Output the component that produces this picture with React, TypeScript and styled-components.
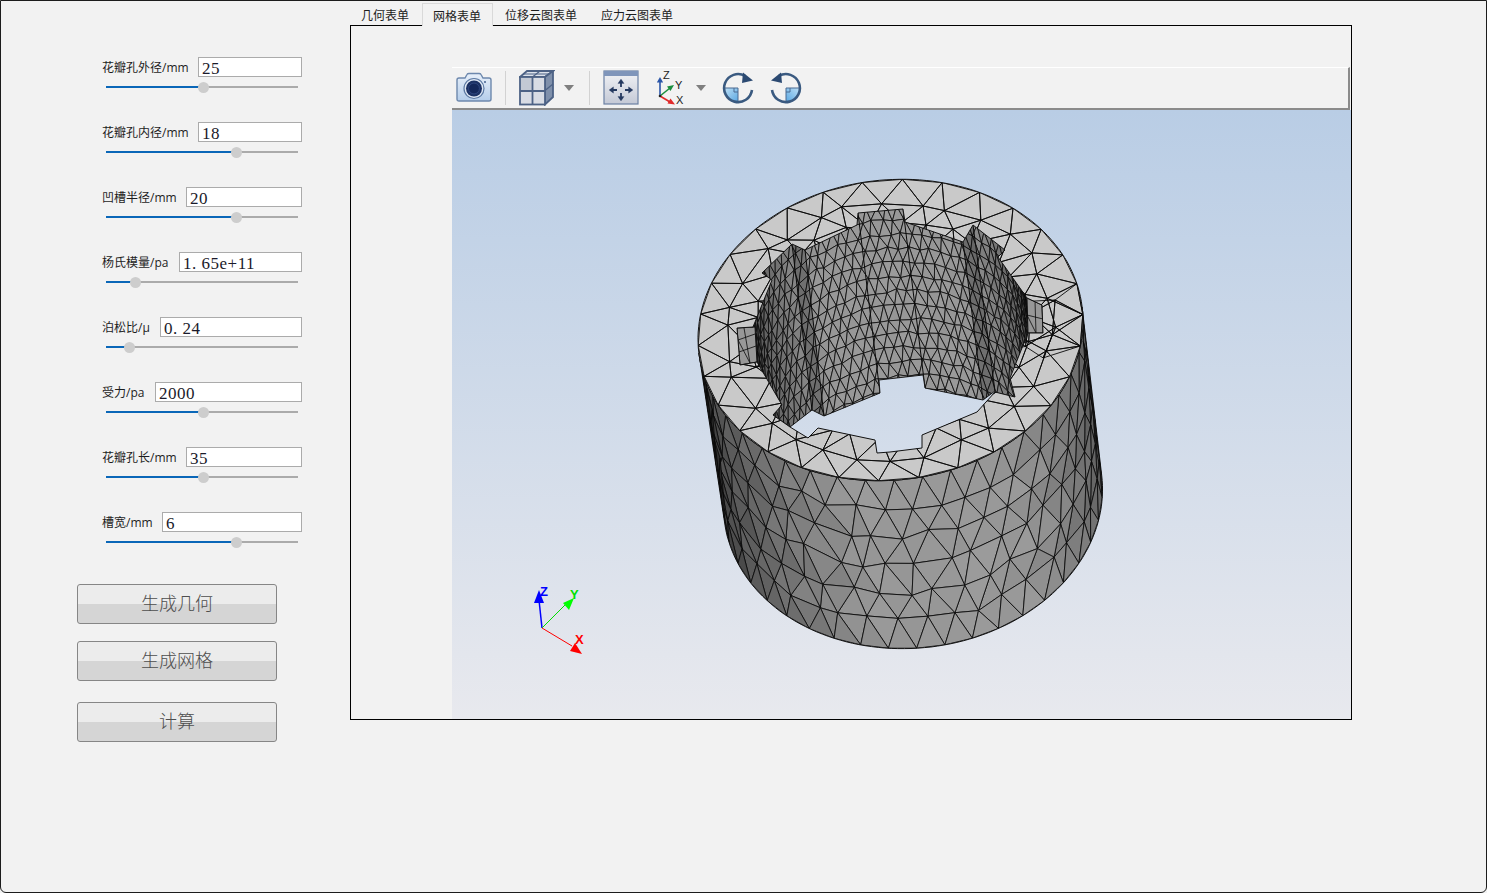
import * as React from 'react';
import styled, { createGlobalStyle } from 'styled-components';

const GlobalStyle = createGlobalStyle`
  html, body {
    margin: 0;
    padding: 0;
    background: #f2f2f2;
  }
`;

type P = [number, number];

const FIELDS = [
  { label: '花瓣孔外径/mm', value: '25', labelWidth: 97, percent: 50.5 },
  { label: '花瓣孔内径/mm', value: '18', labelWidth: 97, percent: 67.7 },
  { label: '凹槽半径/mm', value: '20', labelWidth: 85, percent: 67.7 },
  { label: '杨氏模量/pa', value: '1. 65e+11', labelWidth: 78, percent: 15.1 },
  { label: '泊松比/μ', value: '0. 24', labelWidth: 59, percent: 12 },
  { label: '受力/pa', value: '2000', labelWidth: 54, percent: 50.5 },
  { label: '花瓣孔长/mm', value: '35', labelWidth: 85, percent: 50.5 },
  { label: '槽宽/mm', value: '6', labelWidth: 61, percent: 67.7 },
];

const TABS = [
  { label: '几何表单', active: false, left: 11, right: 13 },
  { label: '网格表单', active: true, left: 10, right: 11 },
  { label: '位移云图表单', active: false, left: 12, right: 12 },
  { label: '应力云图表单', active: false, left: 12, right: 12 },
];

// --- mesh of the part, all coordinates are page pixels ---

const noise = (i: number, j: number) => {
  const s = Math.sin(i * 127.1 + j * 311.7) * 43758.5453;
  return s - Math.floor(s);
};

const onEllipse = (cx: number, cy: number, a: number, b: number, t: number): P => [
  cx + a * Math.cos(t) * 0.993 + b * Math.sin(t) * 0.119,
  cy - a * Math.cos(t) * 0.119 + b * Math.sin(t) * 0.993,
];

const topRim = (t: number, s = 1) => onEllipse(890.5, 330, 193 * s, 150 * s, t);
const bottomRim = (t: number) => onEllipse(913, 498, 190, 150, t);
const wallTop = (t: number) => onEllipse(890.5, 330, 138, 107, t);
const wallBottom = (t: number) => onEllipse(912, 498, 136, 106, t);

const lerp = (p: P, q: P, v: number): P => [p[0] + (q[0] - p[0]) * v, p[1] + (q[1] - p[1]) * v];
const pts = (list: P[]) => list.map((p) => `${p[0].toFixed(1)},${p[1].toFixed(1)}`).join(' ');

interface Tri {
  points: string;
  grey: number;
}

// triangle strips between rows of points, every other row shifted by half a column
const strips = (
  cols: number,
  rows: number,
  vertex: (i: number, j: number) => P,
  shade: (i: number, j: number, seed: number) => number,
) => {
  const tris: Tri[] = [];
  for (let j = 0; j < rows; j++) {
    for (let i = -1; i <= cols; i++) {
      const a = vertex(i, j);
      const b = vertex(i + 1, j);
      const c = vertex(i, j + 1);
      const d = vertex(i + 1, j + 1);
      const first = j % 2 === 0 ? [a, b, c] : [a, b, d];
      const second = j % 2 === 0 ? [b, d, c] : [a, d, c];
      tris.push({ points: pts(first), grey: shade(i, j, 0) });
      tris.push({ points: pts(second), grey: shade(i, j, 1) });
    }
  }
  return tris;
};

const SIDE_COLS = 21;
const SIDE_ROWS = 6;
const sideAngle = (i: number, j: number) => (Math.PI * (i + (j % 2) * 0.5)) / SIDE_COLS;

const sideTris = strips(
  SIDE_COLS,
  SIDE_ROWS,
  (i, j) => {
    const t = sideAngle(i, j);
    const inner = j > 0 && j < SIDE_ROWS;
    const dv = inner ? (noise(i, j) - 0.5) * 0.05 : 0;
    const dt = inner ? (noise(j, i) - 0.5) * 0.07 : 0;
    return lerp(topRim(t + dt), bottomRim(t + dt), j / SIDE_ROWS + dv);
  },
  (i, j, seed) => {
    const d = (sideAngle(i, j) * 180) / Math.PI + 4;
    const base = d < 60 ? 152 - (60 - d) * 1.1 : d > 105 ? 152 - (d - 105) * 1.3 : 152;
    return Math.round(base + (noise(i + seed * 9, j + 3) - 0.5) * 6);
  },
);

const TOP_COLS = 30;
const TOP_SCALES = [1, 0.855, 0.71, 0.57];

const topTris = strips(
  TOP_COLS,
  TOP_SCALES.length - 1,
  (i, j) => {
    const t = (Math.PI * 2 * (i + (j % 2) * 0.5)) / TOP_COLS + 0.05;
    if (j === 0) return topRim(t);
    return topRim(t + (noise(i, j) - 0.5) * 0.11, TOP_SCALES[j] + (noise(j, i) - 0.5) * 0.06);
  },
  () => 200,
);

const WALL_COLS = 40;
const WALL_ROWS = 14;
const wallAngle = (i: number, j: number) => Math.PI + (Math.PI * (i + (j % 2) * 0.5)) / WALL_COLS;

const wallTris = strips(
  WALL_COLS,
  WALL_ROWS,
  (i, j) => {
    const t = wallAngle(i, j) + (noise(i, j) - 0.5) * 0.025;
    return lerp(wallTop(t), wallBottom(t), j / 12 - 0.1 + (noise(j, i) - 0.5) * 0.02);
  },
  (i, j, seed) => {
    const d = Math.abs((wallAngle(i, j) * 180) / Math.PI - 270);
    const base = d < 30 ? 152 : 152 - (d - 30) * 1.45;
    return Math.round(base + (noise(i + seed * 9, j + 5) - 0.5) * 6);
  },
);

const steps = (from: number, to: number, n: number) =>
  Array.from({ length: n + 1 }, (_, k) => from + ((to - from) * k) / n);

const SILHOUETTE: P[] = [
  ...steps(0, Math.PI, 90).map((t) => bottomRim(t)),
  ...steps(Math.PI, 0, 90).map((t) => topRim(t)),
];

const OUTER_RIM = steps(0, Math.PI * 2, 180).map((t) => topRim(t));

const HOLE_BACK: P[] = [
  [740, 365], [737, 328], [753, 327], [772, 280], [762, 273], [792, 244], [805, 250],
  [857, 225], [858, 213], [903, 209], [905, 222], [963, 242], [973, 225], [1005, 250],
  [998, 257], [1027, 298], [1042, 305], [1043, 333], [1028, 333], [1010, 378], [1015, 397],
];

const HOLE_FRONT: P[] = [
  [995, 392], [977, 412], [922, 435], [922, 448], [890, 452], [877, 453], [875, 440],
  [818, 428], [808, 438], [790, 427], [773, 415], [782, 405], [757, 362],
];

const WALL_EDGE: P[] = [
  [1011, 401], [995, 391], [983, 400], [925, 388], [923, 375], [879, 380], [880, 393],
  [824, 416], [812, 410], [790, 427], [773, 415], [757, 362],
];

const NOTCH_FACES: { list: P[]; alpha: number }[] = [
  { list: [[963, 242], [973, 225], [995, 391], [983, 400]], alpha: 0.22 },
  { list: [[792, 244], [805, 250], [824, 416], [812, 410]], alpha: 0.2 },
];

const NOTCH_LINES: [P, P][] = [
  [[858, 213], [880, 393]],
  [[903, 209], [925, 388]],
  [[963, 242], [983, 400]],
  [[973, 225], [995, 391]],
  [[805, 250], [824, 416]],
  [[792, 244], [812, 410]],
];

// the two shallow pockets left and right of the bore
const POCKETS: { outline: P[]; lines: [P, P][] }[] = [
  {
    outline: [[737, 328], [755, 327], [757, 362], [740, 365]],
    lines: [
      [[738, 340], [755, 334]],
      [[739, 352], [756, 346]],
      [[744, 328], [750, 363]],
      [[738, 340], [750, 363]],
    ],
  },
  {
    outline: [[1027, 298], [1042, 305], [1043, 333], [1028, 333]],
    lines: [
      [[1027, 315], [1043, 319]],
      [[1035, 301], [1036, 333]],
      [[1027, 315], [1036, 333]],
    ],
  },
];

const annulusPath =
  `M${pts(OUTER_RIM).replace(/ /g, ' L')} Z ` +
  `M${pts([...HOLE_BACK, ...HOLE_FRONT]).replace(/ /g, ' L')} Z`;

const PartMesh = () => (
  <g>
    <defs>
      <clipPath id="sideClip">
        <polygon points={pts(SILHOUETTE)} />
      </clipPath>
      <clipPath id="wallClip">
        <polygon points={pts([...HOLE_BACK, ...WALL_EDGE])} />
      </clipPath>
      <clipPath id="topClip">
        <path d={annulusPath} clipRule="evenodd" />
      </clipPath>
    </defs>

    <g clipPath="url(#sideClip)">
      {sideTris.map((tri, k) => (
        <polygon key={k} points={tri.points} fill={`rgb(${tri.grey},${tri.grey},${tri.grey})`} stroke="#0a0a0a" strokeWidth={0.85} />
      ))}
    </g>
    <polygon points={pts(SILHOUETTE)} fill="none" stroke="#111" strokeWidth={1} />

    <polygon points={pts([...HOLE_BACK, ...HOLE_FRONT])} fill="url(#viewBg)" />

    <polygon points={pts([...HOLE_BACK, ...WALL_EDGE])} fill="#737373" />
    <g clipPath="url(#wallClip)">
      {wallTris.map((tri, k) => (
        <polygon key={k} points={tri.points} fill={`rgb(${tri.grey},${tri.grey},${tri.grey})`} stroke="#0a0a0a" strokeWidth={0.8} />
      ))}
      {NOTCH_FACES.map((face, k) => (
        <polygon key={k} points={pts(face.list)} fill={`rgba(0,0,0,${face.alpha})`} />
      ))}
      {NOTCH_LINES.map(([p, q], k) => (
        <line key={k} x1={p[0]} y1={p[1]} x2={q[0]} y2={q[1]} stroke="#0a0a0a" strokeWidth={1} />
      ))}
    </g>
    {POCKETS.map((pocket, k) => (
      <g key={k}>
        <polygon points={pts(pocket.outline)} fill="#989898" stroke="#111" strokeWidth={1} />
        {pocket.lines.map(([p, q], n) => (
          <line key={n} x1={p[0]} y1={p[1]} x2={q[0]} y2={q[1]} stroke="#0a0a0a" strokeWidth={0.8} />
        ))}
      </g>
    ))}
    <polyline points={pts(WALL_EDGE)} fill="none" stroke="#111" strokeWidth={0.9} />

    <path d={annulusPath} fill="#c9c9c9" fillRule="evenodd" />
    <g clipPath="url(#topClip)">
      {topTris.map((tri, k) => (
        <polygon key={k} points={tri.points} fill="none" stroke="#0a0a0a" strokeWidth={0.9} />
      ))}
    </g>
    <path d={annulusPath} fill="none" stroke="#111" strokeWidth={1} />
  </g>
);

const AxisTriad = () => (
  <g>
    <line x1={542} y1={628} x2={539} y2={600} stroke="#0000ff" strokeWidth={1.5} />
    <polygon points="539,590 544,603 534,603" fill="#0000ff" />
    <line x1={542} y1={628} x2={566} y2={604} stroke="#00e000" strokeWidth={1} />
    <polygon points="574,598 569,610 563,603" fill="#00ff00" />
    <line x1={542} y1={628} x2={572} y2={646} stroke="#ff0000" strokeWidth={1} />
    <polygon points="582,654 570,651 575,643" fill="#ff0000" />
    <AxisLabel x={540} y={596} fill="#0000ff">Z</AxisLabel>
    <AxisLabel x={570} y={599} fill="#00e000">Y</AxisLabel>
    <AxisLabel x={575} y={644} fill="#ff0000">X</AxisLabel>
  </g>
);

// --- toolbar icons ---

const CameraIcon = () => (
  <svg width={36} height={36} viewBox="0 0 36 36">
    <defs>
      <linearGradient id="camBody" x1="0" y1="0" x2="0" y2="1">
        <stop offset="0" stopColor="#e8f0fa" />
        <stop offset="1" stopColor="#b4cdea" />
      </linearGradient>
    </defs>
    <path
      d="M3 8 H9 L11 4.5 Q11.5 3.5 13 3.5 H23 Q24.5 3.5 25 4.5 L27 8 H33 Q35 8 35 10 V29 Q35 31 33 31 H3 Q1 31 1 29 V10 Q1 8 3 8 Z"
      fill="url(#camBody)"
      stroke="#6d88ad"
      strokeWidth={1.4}
    />
    <circle cx={18} cy={18.5} r={10} fill="#dfe8f4" stroke="#5d7aa3" strokeWidth={1.2} />
    <circle cx={18} cy={18.5} r={8} fill="#1c3264" />
    <circle cx={18} cy={18.5} r={5.4} fill="#14285a" stroke="#3c5690" strokeWidth={0.6} />
    <circle cx={29} cy={12} r={1.1} fill="#4e6b96" />
  </svg>
);

const CubeIcon = () => (
  <svg width={36} height={36} viewBox="0 0 36 36">
    <polygon points="1,7 8,1 34,1 26,7" fill="#dbe1ea" stroke="#4d6285" strokeWidth={1.8} />
    <polygon points="26,7 34,1 34,27 26,34.5" fill="#7f90ab" stroke="#4d6285" strokeWidth={1.8} />
    <rect x={1} y={7} width={25} height={27.5} fill="#d8dce4" stroke="#4d6285" strokeWidth={1.8} />
    <rect x={2} y={8} width={11} height={12} fill="#c3c9d4" />
    <line x1={13.5} y1={7} x2={13.5} y2={34.5} stroke="#4d6285" strokeWidth={1.8} />
    <line x1={1} y1={21} x2={26} y2={21} stroke="#4d6285" strokeWidth={1.8} />
    <line x1={4.5} y1={4} x2={30} y2={4} stroke="#4d6285" strokeWidth={1.2} />
    <line x1={13.5} y1={7} x2={21} y2={1} stroke="#4d6285" strokeWidth={1.2} />
    <line x1={26} y1={20.5} x2={34} y2={14} stroke="#4d6285" strokeWidth={1.3} />
  </svg>
);

const FitIcon = () => (
  <svg width={36} height={36} viewBox="0 0 36 36">
    <defs>
      <linearGradient id="fitBody" x1="0" y1="0" x2="0" y2="1">
        <stop offset="0" stopColor="#f2f3f6" />
        <stop offset="1" stopColor="#c4c9d6" />
      </linearGradient>
    </defs>
    <rect x={1} y={1} width={34} height={33} fill="url(#fitBody)" stroke="#6b80a3" strokeWidth={1.2} />
    <rect x={1} y={1} width={34} height={5} fill="#7f95ba" />
    <g fill="#24385f" stroke="#24385f" strokeWidth={1.8}>
      <line x1={18} y1={12} x2={18} y2={17} />
      <line x1={18} y1={23} x2={18} y2={28} />
      <line x1={9} y1={20} x2={14} y2={20} />
      <line x1={22} y1={20} x2={27} y2={20} />
      <polygon points="18,9 14.8,13.5 21.2,13.5" strokeWidth={0.2} />
      <polygon points="18,31 14.8,26.5 21.2,26.5" strokeWidth={0.2} />
      <polygon points="6,20 10.5,16.8 10.5,23.2" strokeWidth={0.2} />
      <polygon points="30,20 25.5,16.8 25.5,23.2" strokeWidth={0.2} />
    </g>
  </svg>
);

const AxesIcon = () => (
  <svg width={32} height={36} viewBox="0 0 32 36">
    <line x1={5} y1={26} x2={5} y2={11} stroke="#2a55a8" strokeWidth={1.6} />
    <polygon points="5,7 1.8,12.5 8.2,12.5" fill="#2a55a8" />
    <line x1={5} y1={26} x2={15} y2={18} stroke="#1c8f3e" strokeWidth={1.6} />
    <polygon points="19,15 15.5,21 12,16.5" fill="#1c8f3e" />
    <line x1={5} y1={26} x2={15} y2={32} stroke="#e02a2a" strokeWidth={1.6} />
    <polygon points="20,34.5 12.5,33.5 15.5,28.5" fill="#e02a2a" />
    <circle cx={5} cy={26} r={1.3} fill="#222" />
    <IconLetter x={8} y={9}>Z</IconLetter>
    <IconLetter x={20} y={19}>Y</IconLetter>
    <IconLetter x={21} y={34}>X</IconLetter>
  </svg>
);

const QuarterTurnIcon = ({ id, mirrored }: { id: string; mirrored?: boolean }) => (
  <svg width={32} height={32} viewBox="0 0 32 32">
    <defs>
      <linearGradient id={id} x1="0" y1="0" x2="1" y2="1">
        <stop offset="0" stopColor="#bfe0f6" />
        <stop offset="1" stopColor="#5aa8e2" />
      </linearGradient>
    </defs>
    <g transform={mirrored ? 'translate(32,0) scale(-1,1)' : undefined}>
      <path d="M16 16 H2 A14 14 0 0 0 16 30 Z" fill={`url(#${id})`} />
      <path d="M2 16 H16 V30 M12 16 V20 H16" fill="none" stroke="#4a6a92" strokeWidth={1} />
      <path d="M30 18 A14 14 0 1 1 23 3.9" fill="none" stroke="#3a5a80" strokeWidth={2.6} />
      <polygon points="21,0.5 31,8.5 20,11" fill="#2c4a72" />
    </g>
  </svg>
);

const Caret = () => (
  <svg width={10} height={6} viewBox="0 0 10 6">
    <polygon points="0,0 10,0 5,6" fill="#7f7f7f" />
  </svg>
);

export default function App() {
  return (
    <Window>
      <GlobalStyle />
      <LeftPanel>
        <FieldList>
          {FIELDS.map((field) => (
            <FieldBlock key={field.label}>
              <FieldRow>
                <FieldLabel $width={field.labelWidth}>{field.label}</FieldLabel>
                <FieldInput value={field.value} readOnly />
              </FieldRow>
              <SliderTrack>
                <SliderFill style={{ width: `${field.percent}%` }} />
                <SliderThumb style={{ left: `${field.percent}%` }} />
              </SliderTrack>
            </FieldBlock>
          ))}
        </FieldList>
        <ActionButton $top={37}>生成几何</ActionButton>
        <ActionButton $top={17}>生成网格</ActionButton>
        <ActionButton $top={21}>计算</ActionButton>
      </LeftPanel>
      <RightColumn>
        <TabBar>
          {TABS.map((tab) => (
            <Tab key={tab.label} $active={tab.active} $left={tab.left} $right={tab.right}>
              {tab.label}
            </Tab>
          ))}
        </TabBar>
        <Pane>
          <Toolbar>
            <ToolSlot $left={4}><CameraIcon /></ToolSlot>
            <ToolSeparator $left={13} />
            <ToolSlot $left={13}><CubeIcon /></ToolSlot>
            <ToolSlot $left={9}><Caret /></ToolSlot>
            <ToolSeparator $left={15} />
            <ToolSlot $left={13}><FitIcon /></ToolSlot>
            <ToolSlot $left={16}><AxesIcon /></ToolSlot>
            <ToolSlot $left={9}><Caret /></ToolSlot>
            <ToolSlot $left={16}><QuarterTurnIcon id="turnA" /></ToolSlot>
            <ToolSlot $left={16}><QuarterTurnIcon id="turnB" mirrored /></ToolSlot>
          </Toolbar>
          <ViewerCanvas viewBox="452 110 899 609">
            <defs>
              <linearGradient id="viewBg" gradientUnits="userSpaceOnUse" x1="0" y1="110" x2="0" y2="719">
                <stop offset="0" stopColor="#b9cde5" />
                <stop offset="1" stopColor="#e8e9ee" />
              </linearGradient>
            </defs>
            <rect x={452} y={110} width={899} height={609} fill="url(#viewBg)" />
            <PartMesh />
            <AxisTriad />
          </ViewerCanvas>
        </Pane>
      </RightColumn>
    </Window>
  );
}

const Window = styled.div`
  box-sizing: border-box;
  width: 1487px;
  height: 893px;
  display: flex;
  align-items: flex-start;
  overflow: hidden;
  background: #f2f2f2;
  border: 1px solid #1c1c1c;
  border-radius: 0 0 6px 6px;
`;

const LeftPanel = styled.div`
  box-sizing: border-box;
  width: 349px;
  flex-shrink: 0;
  padding: 56px 0 0 76px;
  display: flex;
  flex-direction: column;
`;

const FieldList = styled.div`
  display: flex;
  flex-direction: column;
  gap: 30px;
  margin-left: 24px;
  width: 201px;
`;

const FieldBlock = styled.div`
  display: flex;
  flex-direction: column;
  height: 35px;
`;

const FieldRow = styled.div`
  display: flex;
  align-items: center;
  height: 20px;
`;

const FieldLabel = styled.label<{ $width: number }>`
  box-sizing: border-box;
  width: ${(p) => p.$width}px;
  padding-left: 1px;
  flex-shrink: 0;
  font-family: "Open Sans", "Noto Sans CJK SC", sans-serif;
  font-size: 12px;
  color: #1d1d1d;
  white-space: nowrap;
`;

const FieldInput = styled.input`
  box-sizing: border-box;
  flex: 1;
  min-width: 0;
  height: 20px;
  padding: 3px 0 0 3px;
  border: 1px solid #ababab;
  border-radius: 0;
  outline: none;
  background: #ffffff;
  font-family: "Liberation Serif", serif;
  font-size: 17px;
  line-height: 15px;
  letter-spacing: 0.5px;
  color: #1a1a2a;
`;

const SliderTrack = styled.div`
  position: relative;
  height: 2px;
  width: 192px;
  margin: 9px 0 0 5px;
  background: #ababab;
`;

const SliderFill = styled.div`
  height: 2px;
  background: #0a67b8;
`;

const SliderThumb = styled.div`
  position: absolute;
  top: -4.5px;
  width: 11px;
  height: 11px;
  margin-left: -5px;
  border-radius: 50%;
  background: #cdcdcd;
`;

const ActionButton = styled.button<{ $top: number }>`
  box-sizing: border-box;
  width: 200px;
  height: 40px;
  margin-top: ${(p) => p.$top}px;
  padding: 0 0 4px;
  border: 1px solid #868686;
  border-radius: 3px;
  background: linear-gradient(#ececec 0 50%, #d5d5d5 50% 100%);
  font-family: "Noto Sans CJK SC", sans-serif;
  font-size: 18px;
  font-weight: 300;
  color: #4e4e4e;
`;

const RightColumn = styled.div`
  width: 1002px;
  flex-shrink: 0;
  padding-top: 2px;
  display: flex;
  flex-direction: column;
`;

const TabBar = styled.div`
  display: flex;
  height: 22px;
`;

const Tab = styled.div<{ $active: boolean; $left: number; $right: number }>`
  box-sizing: border-box;
  height: 23px;
  padding: 3px ${(p) => p.$right}px 0 ${(p) => p.$left}px;
  border: ${(p) => (p.$active ? '1px solid #d9d9d9' : 'none')};
  border-bottom: none;
  background: ${(p) => (p.$active ? '#f2f2f2' : 'transparent')};
  position: relative;
  z-index: ${(p) => (p.$active ? 1 : 0)};
  font-family: "Noto Sans CJK SC", sans-serif;
  font-size: 12px;
  line-height: 17px;
  color: #1d1d1d;
  white-space: nowrap;
`;

const Pane = styled.div`
  box-sizing: border-box;
  width: 1002px;
  height: 695px;
  padding: 41px 0 0 101px;
  border: 1px solid #000000;
  background: #f2f2f2;
  display: flex;
  flex-direction: column;
`;

const Toolbar = styled.div`
  box-sizing: border-box;
  height: 43px;
  width: 898px;
  flex-shrink: 0;
  display: flex;
  align-items: center;
  border-top: 1px solid #ffffff;
  border-bottom: 2px solid #8b8b8b;
  border-right: 2px solid #8b8b8b;
`;

const ToolSlot = styled.div<{ $left: number }>`
  display: flex;
  flex-shrink: 0;
  margin-left: ${(p) => p.$left}px;
`;

const ToolSeparator = styled.div<{ $left: number }>`
  width: 1px;
  height: 34px;
  flex-shrink: 0;
  margin-left: ${(p) => p.$left}px;
  background: #d2d2d2;
`;

const ViewerCanvas = styled.svg`
  display: block;
  width: 899px;
  height: 609px;
  flex-shrink: 0;
`;

const AxisLabel = styled.text`
  font-family: "Liberation Sans", sans-serif;
  font-size: 13px;
  font-weight: 700;
`;

const IconLetter = styled.text`
  font-family: "Liberation Sans", sans-serif;
  font-size: 11px;
  fill: #222222;
`;
